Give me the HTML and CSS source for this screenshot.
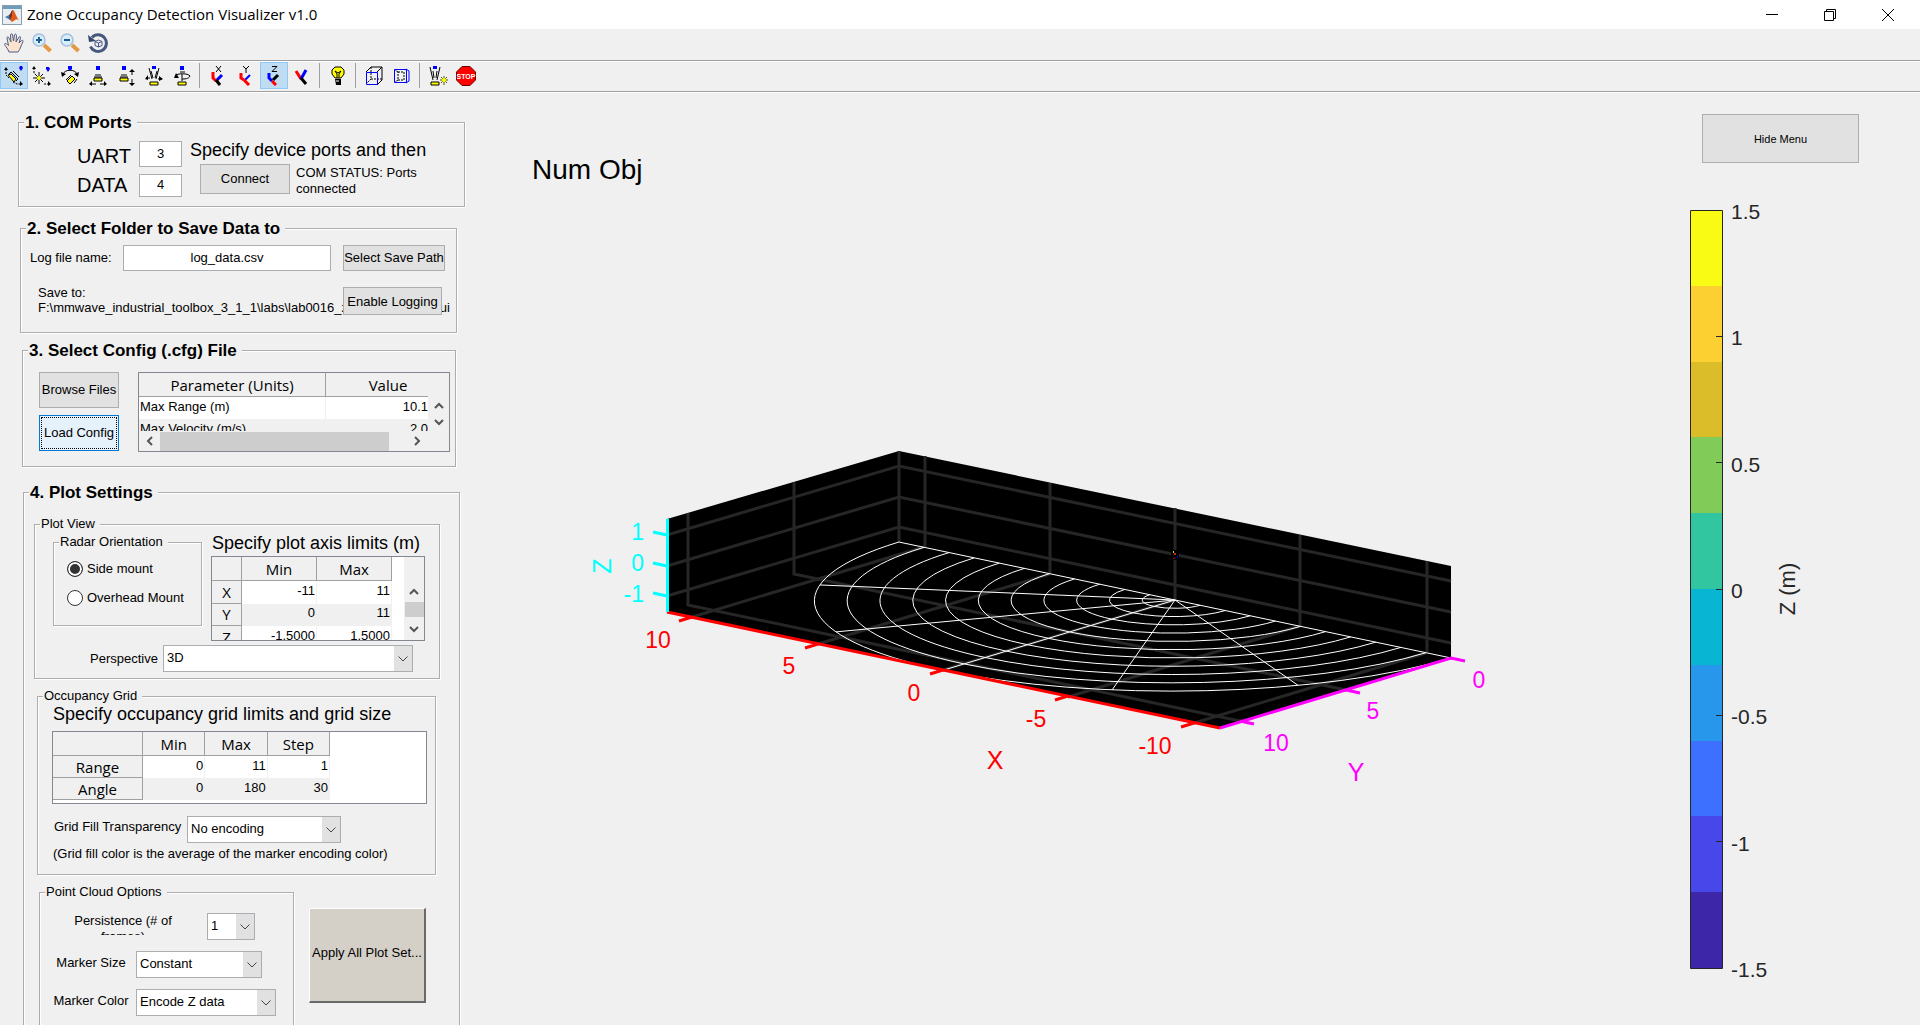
FILE: index.html
```html
<!DOCTYPE html>
<html lang="en">
<head>
  <meta charset="UTF-8">
  <meta name="viewport" content="width=device-width, initial-scale=1.0">
  <title>Zone Occupancy Detection Visualizer v1.0</title>
  <link rel="stylesheet" href="styles.css">
</head>
<body>
  <header class="titlebar">
    <svg class="app-icon" viewBox="0 0 20 20" aria-hidden="true">
      <rect x="0.5" y="0.5" width="19" height="19" fill="#e9eef2" stroke="#8a9eae"/>
      <rect x="1" y="1" width="18" height="3" fill="#6f9cba"/>
      <path d="M3 12l4-2 3 3-2 2z" fill="#3f7fb5"/>
      <path d="M7 10c2-1 2-5 4-5l-1 8-2 2z" fill="#7c2a1c"/>
      <path d="M11 5c2 1 3 7 6 10-2-1-3-1-4 0l-3 2-2-2c2-2 2-7 3-10z" fill="#dd5a1d"/>
    </svg>
    <h1>Zone Occupancy Detection Visualizer v1.0</h1>
    <div class="window-buttons">
      <button type="button" aria-label="Minimize"><svg viewBox="0 0 14 14"><path d="M1 6.500h12"/></svg></button>
      <button type="button" aria-label="Restore"><svg viewBox="0 0 14 14"><path d="M1.500 3.500h9v9h-9zM3.500 3.500v-2h9v9h-2"/></svg></button>
      <button type="button" aria-label="Close"><svg viewBox="0 0 14 14"><path d="M1 1l12 12M13 1L1 13"/></svg></button>
    </div>
  </header>

  <div class="toolbar toolbar-top">
    <button type="button" aria-label="Pan">
      <svg viewBox="0 0 20 20"><path d="M5 19c-1-3-3-5-4.500-7.500 0-1.500 2-1.500 4 1L3 5c0-1.500 1.500-1.500 2 0l2 4L6.500 2c.3-1.500 2-1.500 2 0l1 6 1-6c.5-1.500 2-1 2 .5L12 9l3-5c1-1 2 0 1.500 1L15 10l2.500-2.500c1-.7 2 .2 1.500 1.200-2 3.300-2.500 7.300-5 10.300z" fill="#fbe3cf" stroke="#4a5f86"/></svg>
    </button>
    <button type="button" aria-label="Zoom in">
      <svg viewBox="0 0 20 20"><path d="M12 12l6.500 6" stroke="#e39a45" stroke-width="4"/><circle cx="7" cy="7" r="6" fill="#d6edfb" stroke="#a5bfdc" stroke-width="1.500"/><path d="M7 4v6M4 7h6" stroke="#1d5d91" stroke-width="2"/></svg>
    </button>
    <button type="button" aria-label="Zoom out">
      <svg viewBox="0 0 20 20"><path d="M12 12l6.500 6" stroke="#e39a45" stroke-width="4"/><circle cx="7" cy="7" r="6" fill="#d6edfb" stroke="#a5bfdc" stroke-width="1.500"/><path d="M4 7h6" stroke="#1d5d91" stroke-width="2"/></svg>
    </button>
    <button type="button" aria-label="Rotate 3D">
      <svg viewBox="0 0 20 20"><path d="M4 4.500a8.300 8.300 0 1 1-1.500 9" fill="none" stroke="#47587e" stroke-width="3"/><path d="M0 2l1 7 7-1z" fill="#33466f"/><path d="M7 8.500l3.500-1.500 3.500 1.500v4L10.500 14 7 12.500zM7 8.500l3.500 1.500L14 8.500M10.500 10v4" fill="#eef" stroke="#47587e"/></svg>
    </button>
  </div>

  <div class="toolbar toolbar-camera">
    <button type="button" class="active" aria-label="Orbit camera">
      <svg viewBox="0 0 20 20"><path d="M2 3v6M2 9l3 3M9 16l4 2h3" class="dash"/><path d="M0 4l2-3 2 3zM16 15l3 3-3 2z"/><path d="M16 0h2l1 2-2 3-2-3z" fill="#00f"/><path d="M5 8l2-2 7 7-2 2M9 5l6 6" class="ln"/><path d="M4 9l3-1 5 5-2 3z" class="yellow"/></svg>
    </button>
    <button type="button" aria-label="Orbit scene light">
      <svg viewBox="0 0 20 20"><path d="M2 2v5l2 2M12 18h4" class="dash"/><path d="M0 3l2-3 2 3zM16 15l3 3-3 2z"/><path d="M14 1h3l1 2-2 3-2-3z" fill="#00f"/><path d="M7 6v12M1 12h12M3 8l8 8M11 8l-8 8" class="ln"/><circle cx="7" cy="12" r="2" fill="#ff0"/></svg>
    </button>
    <button type="button" aria-label="Pan tilt camera">
      <svg viewBox="0 0 20 20"><path d="M3 8c2-5 12-5 14 0" class="ln"/><path d="M1 6l1 5 4-3zM19 6l-1 5-4-3z"/><path d="M8 0h4v3l-2 2-2-2z" fill="#00f"/><path d="M6 14l5-5M14 17l3-4" class="ln"/><path d="M7 15l5-5 3 3-5 5z" class="yellow"/></svg>
    </button>
    <button type="button" aria-label="Move camera horizontally">
      <svg viewBox="0 0 20 20"><rect x="8" y="0" width="4" height="4" fill="#00f"/><path d="M7 9h6M6 11h8M2 18h6M12 18h6" class="ln"/><path d="M1 18l3-3v5zM19 18l-3-3v5z"/><path d="M6 12h8v3h-8z" class="yellow"/></svg>
    </button>
    <button type="button" aria-label="Move camera vertically">
      <svg viewBox="0 0 20 20"><rect x="6" y="0" width="4" height="4" fill="#00f"/><path d="M5 9h6M4 11h8M16 5v4M16 13v5" class="ln"/><path d="M16 3l3 3h-6zM16 20l3-3h-6z"/><path d="M4 12h8v3h-8z" class="yellow"/></svg>
    </button>
    <button type="button" aria-label="Move camera forward and back">
      <svg viewBox="0 0 20 20"><rect x="8" y="0" width="4" height="3" fill="#00f"/><path d="M5 2l3 11M15 2l-3 11M2 12h4M14 13h4M7 5l2 7M13 5l-2 7" class="ln"/><path d="M1 13l3-4v5zM19 13l-4-3v5z"/><path d="M6 16h8v3h-8z" class="yellow"/></svg>
    </button>
    <button type="button" aria-label="Roll camera">
      <svg viewBox="0 0 20 20"><rect x="8" y="0" width="4" height="4" fill="#00f"/><path d="M3 10c2-3 13-3 15 0-1 3-6 3-8 3M8 6h5M10 8v7" class="ln"/><path d="M2 12l2-5 3 5z"/><path d="M6 16h8v3h-8z" class="yellow"/></svg>
    </button>
    <span class="separator"></span>
    <button type="button" aria-label="Principal axis X">
      <svg viewBox="0 0 20 20"><path d="M8 0l5 6M13 0L8 6" class="ln"/><path d="M5 6v6l3 3" stroke="#f00" stroke-width="3"/><path d="M9 14l5-5" stroke="#00f" stroke-width="3"/><path d="M8 14l4 5" class="thick"/></svg>
    </button>
    <button type="button" aria-label="Principal axis Y">
      <svg viewBox="0 0 20 20"><path d="M7 0l3 3 3-3M10 3v4" class="ln"/><path d="M5 7v5l3 2" stroke="#f00" stroke-width="3"/><path d="M9 14l5-5" stroke="#00f" stroke-width="2"/><path d="M8 14l5 5" stroke="#f00" stroke-width="3"/></svg>
    </button>
    <button type="button" class="active" aria-label="Principal axis Z">
      <svg viewBox="0 0 20 20"><path d="M8 .5h5l-5 5h5" class="ln"/><path d="M5 7v5l3 3" stroke="#00f" stroke-width="3"/><path d="M9 14l5-5" class="thick"/><path d="M8 15l4 4" stroke="#f00" stroke-width="3"/></svg>
    </button>
    <button type="button" aria-label="No principal axis">
      <svg viewBox="0 0 20 20"><path d="M4 5l5 8" stroke="#f00" stroke-width="3"/><path d="M14 4l-5 9" stroke="#00f" stroke-width="3"/><path d="M9 12l5 6" class="thick"/></svg>
    </button>
    <span class="separator"></span>
    <button type="button" aria-label="Toggle scene light">
      <svg viewBox="0 0 20 20"><path d="M7 12L4 8V4l3-3h6l3 3v4l-3 4z" class="yellow"/><path d="M9 12V8L7 5l3 2 3-2-2 3v4" class="ln"/><path d="M7 13h6v6H8z"/><path d="M8 15h3" stroke="#fff"/></svg>
    </button>
    <span class="separator"></span>
    <button type="button" aria-label="Orthographic projection">
      <svg viewBox="0 0 20 20"><path d="M2 6l5-5h11v13l-5 5M13 6l5-5" class="ln"/><path d="M7 1v12h11M7 13l-5 5" class="dash"/><path d="M2.500 6.500h11v12h-11z" fill="none" stroke="#00f"/></svg>
    </button>
    <button type="button" aria-label="Perspective projection">
      <svg viewBox="0 0 20 20"><path d="M2.500 3.500h12v13h-12zM14 3l3 2v10l-3 2" fill="none" stroke="#00f"/><path d="M6 6h6v8H6zM6 6L3 4M6 14l-3 2" class="dash"/></svg>
    </button>
    <span class="separator"></span>
    <button type="button" aria-label="Reset camera and light">
      <svg viewBox="0 0 20 20"><rect x="5" y="0" width="4" height="3" fill="#00f"/><path d="M2 1l3 13M12 1L9 14M5 5l1 7M9 5l-1 7" class="ln"/><path d="M3 16h8v3H3z" class="yellow"/><path d="M16 10v9M12 14h8M13 11l6 6M19 11l-6 6" stroke="#550"/><circle cx="16" cy="14" r="2" fill="#ff0"/></svg>
    </button>
    <button type="button" aria-label="Stop">
      <svg class="stop-icon" viewBox="0 0 20 20"><path d="M6 .5h8L19.500 6v8L14 19.500H6L.5 14V6z" fill="#f00" stroke="#600"/><text x="10" y="13">STOP</text></svg>
    </button>
  </div>

  <main class="workspace">
    <form class="sidebar">
      <fieldset class="panel ports">
        <legend>1. COM Ports</legend>
        <div class="port-grid">
          <label for="uart">UART</label><input id="uart" type="text" value="3">
          <label for="data">DATA</label><input id="data" type="text" value="4">
        </div>
        <div class="port-connect">
          <p class="hint">Specify device ports and then</p>
          <div class="connect-row">
            <button type="button" class="btn">Connect</button>
            <p>COM STATUS: Ports connected</p>
          </div>
        </div>
      </fieldset>

      <fieldset class="panel folder">
        <legend>2. Select Folder to Save Data to</legend>
        <div class="file-row">
          <label for="log-name">Log file name:</label>
          <input id="log-name" type="text" value="log_data.csv">
          <button type="button" class="btn">Select Save Path</button>
        </div>
        <div class="save-row">
          <p>Save to: <br>F:\mmwave_industrial_toolbox_3_1_1\labs\lab0016_zone_occupied\gui</p>
          <button type="button" class="btn">Enable Logging</button>
        </div>
      </fieldset>

      <fieldset class="panel config">
        <legend>3. Select Config (.cfg) File</legend>
        <div class="config-buttons">
          <button type="button" class="btn">Browse Files</button>
          <button type="button" class="btn focused">Load Config</button>
        </div>
        <div class="table-frame config-frame">
          <div class="config-scroll">
            <table class="config-table">
              <thead><tr><th>Parameter (Units)</th><th>Value</th></tr></thead>
              <tbody>
                <tr><td>Max Range (m)</td><td>10.1</td></tr>
                <tr><td>Max Velocity (m/s)</td><td>2.0</td></tr>
              </tbody>
            </table>
            <div class="v-arrows">
              <svg viewBox="0 0 10 7"><path d="M1 6l4-4 4 4"/></svg>
              <svg viewBox="0 0 10 7"><path d="M1 1l4 4 4-4"/></svg>
            </div>
          </div>
          <div class="h-scroll">
            <svg viewBox="0 0 7 10"><path d="M6 1L2 5l4 4"/></svg>
            <span class="h-thumb"></span>
            <svg viewBox="0 0 7 10"><path d="M1 1l4 4-4 4"/></svg>
          </div>
        </div>
      </fieldset>

      <fieldset class="panel settings">
        <legend>4. Plot Settings</legend>

        <fieldset class="group plot-view">
          <legend>Plot View</legend>
          <div class="view-row">
            <fieldset class="group orientation">
              <legend>Radar Orientation</legend>
              <label><input type="radio" name="mount" checked>Side mount</label>
              <label><input type="radio" name="mount">Overhead Mount</label>
            </fieldset>
            <div class="limits">
              <p class="hint">Specify plot axis limits (m)</p>
              <div class="table-frame limits-frame">
                <table class="limits-table">
                  <thead><tr><th></th><th>Min</th><th>Max</th></tr></thead>
                  <tbody>
                    <tr><th>X</th><td>-11</td><td>11</td></tr>
                    <tr><th>Y</th><td>0</td><td>11</td></tr>
                    <tr><th>Z</th><td>-1.5000</td><td>1.5000</td></tr>
                  </tbody>
                </table>
                <div class="v-scroll">
                  <svg viewBox="0 0 10 7"><path d="M1 6l4-4 4 4"/></svg>
                  <span class="v-thumb"></span>
                  <svg viewBox="0 0 10 7"><path d="M1 1l4 4 4-4"/></svg>
                </div>
              </div>
            </div>
          </div>
          <div class="perspective-row">
            <label for="perspective">Perspective</label>
            <select id="perspective"><option>3D</option></select>
          </div>
        </fieldset>

        <fieldset class="group occupancy">
          <legend>Occupancy Grid</legend>
          <p class="hint">Specify occupancy grid limits and grid size</p>
          <div class="table-frame grid-frame">
            <table class="grid-table">
              <thead><tr><th></th><th>Min</th><th>Max</th><th>Step</th></tr></thead>
              <tbody>
                <tr><th>Range</th><td>0</td><td>11</td><td>1</td></tr>
                <tr><th>Angle</th><td>0</td><td>180</td><td>30</td></tr>
              </tbody>
            </table>
          </div>
          <div class="fill-row">
            <label for="fill">Grid Fill Transparency</label>
            <select id="fill"><option>No encoding</option></select>
          </div>
          <p class="note">(Grid fill color is the average of the marker encoding color)</p>
        </fieldset>

        <div class="cloud-row">
          <fieldset class="group cloud">
            <legend>Point Cloud Options</legend>
            <div class="cloud-field">
              <label class="clipped" for="persistence">Persistence (# of frames)</label>
              <select id="persistence" class="select-persistence"><option>1</option></select>
            </div>
            <div class="cloud-field">
              <label for="marker-size">Marker Size</label>
              <select id="marker-size" class="select-size"><option>Constant</option></select>
            </div>
            <div class="cloud-field">
              <label for="marker-color">Marker Color</label>
              <select id="marker-color" class="select-color"><option>Encode Z data</option></select>
            </div>
          </fieldset>
          <button type="button" class="apply">Apply All Plot Set...</button>
        </div>
      </fieldset>
    </form>

    <section class="plot">
      <h2>Num Obj</h2>
      <svg class="scene" viewBox="480 200 1180 800" role="img" aria-label="3D occupancy plot">
        <!-- walls and floor -->
        <path d="M899 451L1451 566V658L1220 728 667 612V519z"/>

        <g class="grid">
          <path d="M899 451v91M925 456v91M1050 483v91M1175 508v92M1300 535v91M1427 561v91"/>
          <path d="M688 513v92l552 116M794 482v92l552 116"/>
          <path d="M667 535l232-69 552 115M667 566l232-69 552 115M667 596l232-69 552 116"/>
          <path d="M924 547l-232 70M1050 574l-232 70M1175 600l-232 70M1300 626l-232 71M1426 653l-232 70"/>
        </g>

        <!-- range arcs and angle spokes, drawn in metres on the floor -->
        <g class="zones" transform="matrix(-25.1 -5.27 -21.09 6.39 1175 600)">
          <path d="M-1 0A1 1 0 0 0 1 0M-2 0A2 2 0 0 0 2 0M-3 0A3 3 0 0 0 3 0M-4 0A4 4 0 0 0 4 0M-5 0A5 5 0 0 0 5 0M-6 0A6 6 0 0 0 6 0M-7 0A7 7 0 0 0 7 0M-8 0A8 8 0 0 0 8 0M-9 0A9 9 0 0 0 9 0M-10 0A10 10 0 0 0 10 0M-11 0A11 11 0 0 0 11 0"/>
          <path d="M-11 0H11M0 0V11M0 0L9.526 5.500M0 0L5.500 9.526M0 0L-5.500 9.526M0 0L-9.526 5.500"/>
        </g>

        <g>
          <rect x="1171" y="550" width="8" height="10"/>
          <rect x="1173" y="551" width="1" height="2" fill="#fd0"/>
          <rect x="1174" y="553" width="2" height="2" fill="#c22"/>
          <rect x="1173" y="558" width="2" height="1" fill="#a00"/>
          <rect x="1177" y="556" width="1" height="2" fill="#00f"/>
        </g>

        <g class="axis axis-x">
          <path d="M667 612l553 116M692 617l-13 4M818 644l-13 4M943 670l-13 4M1068 696l-13 4M1194 723l-13 4"/>
          <text x="658" y="648">10</text>
          <text x="789" y="674">5</text>
          <text x="914" y="701">0</text>
          <text x="1036" y="727">-5</text>
          <text x="1155" y="754">-10</text>
          <text class="axis-name" x="995" y="769">X</text>
        </g>
        <g class="axis axis-y">
          <path d="M1220 728l231-70 14 3M1346 690l14 3M1240 721l14 3"/>
          <text x="1479" y="688">0</text>
          <text x="1373" y="719">5</text>
          <text x="1276" y="751">10</text>
          <text class="axis-name" x="1356" y="781">Y</text>
        </g>
        <g class="axis axis-z">
          <path d="M667.500 519v93M667 535l-14-3M667 566l-14-3M667 596l-14-3"/>
          <text x="644" y="540">1</text>
          <text x="644" y="571">0</text>
          <text x="644" y="602">-1</text>
          <text class="axis-name z-name" transform="translate(611 566) rotate(-90)">Z</text>
        </g>
      </svg>
    </section>

    <aside class="legend-side">
      <button type="button" class="btn hide-menu">Hide Menu</button>
      <svg class="colorbar" viewBox="0 0 130 790" role="img" aria-label="Z color scale in metres">
        <g shape-rendering="crispEdges">
          <rect x="1" y="10" width="32" height="76" fill="#f9fb15"/>
          <rect x="1" y="86" width="32" height="76" fill="#fcd030"/>
          <rect x="1" y="162" width="32" height="75" fill="#dabd29"/>
          <rect x="1" y="237" width="32" height="76" fill="#81cc59"/>
          <rect x="1" y="313" width="32" height="76" fill="#31c69f"/>
          <rect x="1" y="389" width="32" height="76" fill="#08b5d2"/>
          <rect x="1" y="465" width="32" height="76" fill="#2797eb"/>
          <rect x="1" y="541" width="32" height="75" fill="#3e70ff"/>
          <rect x="1" y="616" width="32" height="76" fill="#4747ea"/>
          <rect x="1" y="692" width="32" height="76" fill="#3e26a8"/>
        </g>
        <path class="bar-frame" d="M.5 10.500h32v758h-32zM26 136.500h7M26 262.500h7M26 389.500h7M26 515.500h7M26 641.500h7"/>
        <text x="41" y="19">1.5</text>
        <text x="41" y="145">1</text>
        <text x="41" y="272">0.5</text>
        <text x="41" y="398">0</text>
        <text x="41" y="524">-0.5</text>
        <text x="41" y="651">-1</text>
        <text x="41" y="777">-1.5</text>
        <text class="bar-name" transform="translate(105 389) rotate(-90)">Z (m)</text>
      </svg>
    </aside>
  </main>
</body>
</html>
```
FILE: styles.css
```css
* {
  box-sizing: border-box;
}

body {
  display: flex;
  flex-direction: column;
  height: 100vh;
  margin: 0;
  overflow: hidden;
  background-color: #f0f0f0;
  color: #000;
  font-family: "Liberation Sans", Arial, sans-serif;
  font-size: 13px;
  line-height: 16px;
}

p, h1, h2 {
  margin: 0;
  font-weight: normal;
}

button, input, select {
  font: inherit;
  color: inherit;
}

/* Title bar */
.titlebar {
  display: flex;
  align-items: center;
  flex: none;
  height: 29px;
  padding: 0 3px 0 2px;
  background-color: #fff;
}

.titlebar h1 {
  flex: 1;
  margin-left: 5px;
  padding-bottom: 2px;
  font-family: "Open Sans", sans-serif;
  font-size: 15px;
  line-height: 20px;
}

.app-icon {
  width: 20px;
  height: 20px;
}

.window-buttons {
  display: flex;
}

.window-buttons button {
  display: flex;
  align-items: center;
  justify-content: center;
  width: 58px;
  height: 29px;
  padding: 0;
  border: 0;
  background: none;
}

.window-buttons svg {
  width: 14px;
  height: 14px;
  fill: none;
  stroke: #000;
}

/* Toolbars */
.toolbar {
  display: flex;
  align-items: center;
  flex: none;
  border-bottom: 1px solid #a0a0a0;
  box-shadow: 0 1px 0 #fff;
}

.toolbar-top {
  height: 32px;
  padding-bottom: 3px;
}

.toolbar-camera {
  height: 31px;
  padding-bottom: 1px;
}

.toolbar button {
  display: flex;
  align-items: center;
  justify-content: center;
  width: 28px;
  height: 27px;
  padding: 0;
  border: 1px solid transparent;
  background: none;
}

.toolbar .active {
  border-color: #90c8f6;
  background-color: #c0dcf3;
}

.toolbar svg {
  width: 20px;
  height: 20px;
}

.toolbar .ln {
  fill: none;
  stroke: #000;
}

.toolbar .dash {
  fill: none;
  stroke: #000;
  stroke-dasharray: 2 1;
}

.toolbar .thick {
  fill: none;
  stroke: #000;
  stroke-width: 3;
}

.toolbar path[stroke-width] {
  fill: none;
}

.toolbar .yellow {
  fill: #ff0;
  stroke: #000;
}

.separator {
  width: 1px;
  height: 25px;
  margin: 0 4px 0 3px;
  background-color: #a0a0a0;
}

.stop-icon text {
  fill: #fff;
  font-size: 7px;
  font-weight: bold;
  text-anchor: middle;
}

/* Workspace */
.workspace {
  display: flex;
  flex: 1;
  min-height: 0;
  padding-top: 1px;
}

.sidebar {
  flex: none;
  width: 25%;
  min-width: 480px;
  padding: 18px 16px 0 18px;
  overflow: hidden;
}

.panel, .group {
  --pad: 0px;
  min-width: 0;
  margin: 0;
  padding: 0 0 0 var(--pad);
  border: 1px solid #adadad;
  box-shadow: 1px 1px 0 #fff, inset 1px 1px 0 #fff;
}

/* the title stays by the corner whatever the panel's inner padding */
.panel > legend, .group > legend {
  margin-left: calc(5px - var(--pad));
  padding: 0 5px 0 1px;
  background-color: #f0f0f0;
}

.panel > legend {
  padding-top: 2px;
  font-size: 17px;
  font-weight: bold;
  line-height: 20px;
}

.group > legend {
  font-size: 13px;
  line-height: 16px;
}

.hint {
  font-size: 18px;
  line-height: 22px;
  white-space: nowrap;
}

.btn {
  padding: 0;
  border: 1px solid #adadad;
  background-color: #e1e1e1;
  text-align: center;
  white-space: nowrap;
}

input[type="text"] {
  min-width: 0;
  height: 26px;
  padding: 0 0 2px;
  border: 1px solid #abadb3;
  background-color: #fff;
  text-align: center;
}

select {
  height: 27px;
  padding: 0 22px 2px 3px;
  border: 1px solid #abadb3;
  border-radius: 0;
  appearance: none;
  background-color: #fff;
  background-image:
    url("data:image/svg+xml,%3Csvg xmlns='http://www.w3.org/2000/svg' width='10' height='6'%3E%3Cpath d='M.5.5L5 5 9.500.5' fill='none' stroke='%23444'/%3E%3C/svg%3E"),
    linear-gradient(#e1e1e1, #e1e1e1);
  background-position: right 4px center, right center;
  background-repeat: no-repeat;
  background-size: 10px 6px, 18px 100%;
}

/* 1. COM Ports */
.ports {
  --pad: 58px;
  display: flex;
  gap: 8px;
  margin-right: -1px;
  padding: 6px 0 9px var(--pad);
}

.port-grid {
  display: grid;
  grid-template-columns: 52px 43px;
  gap: 6px 10px;
  align-items: center;
  padding-top: 2px;
}

.port-grid label {
  font-size: 20px;
  line-height: 22px;
}

.port-grid label:first-child {
  padding-top: 4px;
}

.port-grid input:last-child {
  height: 23px;
}

.connect-row {
  display: flex;
  gap: 6px;
  margin-top: 3px;
  padding-left: 10px;
}

.connect-row .btn {
  width: 90px;
  height: 30px;
}

.connect-row p {
  width: 140px;
  padding-top: 1px;
}

/* 2. Save folder */
.folder {
  margin: 10px 7px 0 2px;
}

.file-row {
  display: flex;
  align-items: center;
  padding: 6px 11px 0 9px;
}

.file-row label {
  width: 93px;
}

.file-row input {
  flex: 1;
}

.file-row .btn {
  width: 102px;
  height: 26px;
  margin-left: 12px;
}

.save-row {
  position: relative;
  padding: 14px 0 17px 17px;
  line-height: 15px;
  white-space: nowrap;
}

.save-row .btn {
  position: absolute;
  top: 16px;
  right: 14px;
  width: 99px;
  height: 28px;
}

/* 3. Config file */
.config {
  --pad: 16px;
  display: flex;
  gap: 19px;
  margin: 6px 8px 0 4px;
  padding: 11px 5px 14px var(--pad);
}

.config-buttons {
  display: flex;
  flex-direction: column;
  gap: 7px;
}

.config-buttons .btn {
  width: 80px;
  height: 36px;
}

.btn.focused {
  border-color: #0078d7;
  outline: 1px dotted #000;
  outline-offset: -3px;
  background-color: #e5f1fb;
}

.table-frame {
  overflow: hidden;
  border: 1px solid #828790;
}

table {
  border-collapse: separate;
  border-spacing: 0;
}

th, td {
  height: 22px;
  padding: 0;
}

th {
  border-right: 1px solid #a0a0a0;
  border-bottom: 1px solid #a0a0a0;
  background-color: #f0f0f0;
  font-family: "Open Sans", sans-serif;
  font-size: 15px;
  font-weight: normal;
  line-height: 20px;
}

thead th {
  height: 24px;
}

td {
  padding: 0 1px 3px;
  border-right: 1px solid #f0f0f0;
  background-color: #fff;
  line-height: 16px;
  text-align: right;
}

tbody tr:nth-child(even) td {
  background-color: #f0f0f0;
}

.config-frame {
  flex: 1;
  height: 80px;
}

.config-scroll {
  display: flex;
  height: 58px;
  overflow: hidden;
}

.config-table {
  flex: 1;
  table-layout: fixed;
}

.config-table th:first-child {
  width: 187px;
}

.config-table th:last-child {
  padding-left: 22px;
  border-right: 0;
}

.config-table td:first-child {
  text-align: left;
}

.config-table td:last-child {
  padding-right: 0;
  border-right: 0;
}

.v-arrows {
  display: flex;
  flex-direction: column;
  align-items: center;
  gap: 10px;
  width: 21px;
  padding-top: 29px;
}

.v-arrows svg, .v-scroll svg {
  width: 10px;
  height: 7px;
}

.h-scroll svg {
  width: 7px;
  height: 10px;
}

.v-arrows path, .v-scroll path, .h-scroll path {
  fill: none;
  stroke: #555;
  stroke-width: 2;
}

.h-scroll {
  display: flex;
  align-items: center;
  height: 20px;
  padding: 0 28px 0 7px;
}

.h-thumb {
  flex: 1;
  height: 19px;
  margin: 0 25px 0 7px;
  background-color: #cdcdcd;
}

/* 4. Plot settings */
.settings {
  --pad: 10px;
  margin: 14px 4px 0 5px;
  padding: 13px 0 80px var(--pad);
}

.plot-view {
  margin-right: 19px;
  padding-bottom: 6px;
}

.view-row {
  display: flex;
  gap: 9px;
  padding: 2px 14px 0 18px;
}

.orientation {
  flex: 1;
  height: 92px;
}

.orientation label {
  display: flex;
  align-items: center;
  gap: 4px;
  height: 16px;
  margin: 11px 0 13px 13px;
  white-space: nowrap;
}

.orientation input {
  width: 16px;
  height: 16px;
  margin: 0;
  border: 1px solid #333;
  border-radius: 50%;
  appearance: none;
  background-color: #fff;
}

.orientation input:checked {
  background-color: #333;
  box-shadow: inset 0 0 0 2px #fff;
}

.limits {
  width: 214px;
}

.limits .hint {
  padding: 0 0 4px 1px;
  line-height: 18px;
}

.limits-frame {
  display: flex;
  justify-content: space-between;
  height: 85px;
  background-color: #fff;
}

.limits-table {
  flex: none;
  width: 180px;
  height: 92px;
  table-layout: fixed;
}

.limits-table th:first-child {
  width: 30px;
}

.v-scroll {
  display: flex;
  flex-direction: column;
  align-items: center;
  width: 20px;
  padding-top: 31px;
  background-color: #f0f0f0;
}

.v-thumb {
  width: 19px;
  height: 15px;
  margin: 7px 0 9px;
  background-color: #cdcdcd;
}

.perspective-row {
  display: flex;
  align-items: center;
  gap: 5px;
  margin-top: 4px;
  padding: 0 26px 0 55px;
}

.perspective-row select {
  flex: 1;
}

.occupancy {
  --pad: 14px;
  margin: 9px 23px 0 3px;
  padding: 0 8px 12px var(--pad);
}

.occupancy .hint {
  padding: 0 0 2px 1px;
  line-height: 20px;
}

.grid-frame {
  height: 73px;
  margin-top: 5px;
  background-color: #fff;
}

.grid-table {
  width: 277px;
  table-layout: fixed;
}

.grid-table th:first-child {
  width: 90px;
}

.fill-row {
  display: flex;
  gap: 6px;
  margin-top: 12px;
  padding-left: 2px;
}

.fill-row label {
  width: 127px;
  padding-top: 3px;
  white-space: nowrap;
}

.fill-row select {
  width: 154px;
}

.note {
  margin-top: 3px;
  padding-left: 1px;
  white-space: nowrap;
}

.cloud-row {
  display: flex;
  align-items: flex-start;
  gap: 15px;
  margin: 9px 33px 0 5px;
}

.cloud {
  --pad: 10px;
  flex: 1;
  padding: 13px 0 40px var(--pad);
}

.cloud-field {
  display: flex;
  gap: 4px;
  height: 27px;
  margin-bottom: 11px;
}

.cloud-field label {
  width: 82px;
  padding: 4px 0;
  text-align: center;
  white-space: nowrap;
}

.cloud-field .clipped {
  width: 106px;
  height: 22px;
  margin: 0 27px 0 20px;
  padding: 0;
  overflow: hidden;
  white-space: normal;
}

.select-persistence {
  width: 48px;
}

.select-size {
  width: 126px;
}

.select-color {
  width: 140px;
}

.apply {
  width: 117px;
  height: 95px;
  margin-top: 24px;
  padding: 0 0 4px;
  border-width: 1px 2px 2px 1px;
  border-style: solid;
  border-color: #fff #696969 #696969 #fff;
  background-color: #d4d0c8;
  white-space: nowrap;
}

/* Plot */
.plot {
  flex: 1;
  min-width: 0;
}

.plot h2 {
  padding: 61px 0 0 52px;
  font-size: 28px;
  line-height: 32px;
}

.scene {
  display: block;
  width: 100%;
  margin-top: 14px;
}

.grid {
  fill: none;
  stroke: #262626;
  stroke-width: 3;
}

.zones path {
  fill: none;
  stroke: #fff;
  stroke-width: 1;
  vector-effect: non-scaling-stroke;
}

.axis path {
  fill: none;
  stroke-width: 3;
}

.axis text {
  font-size: 23px;
  text-anchor: middle;
}

.axis .axis-name {
  font-size: 25px;
}

.axis-x {
  fill: #f00;
  stroke: #f00;
}

.axis-y {
  fill: #f0f;
  stroke: #f0f;
}

.axis-z {
  fill: #0ff;
  stroke: #0ff;
}

.axis text {
  stroke: none;
}

.axis-z text {
  text-anchor: end;
}

.axis-z .z-name {
  text-anchor: middle;
}

/* Color scale */
.legend-side {
  display: flex;
  flex-direction: column;
  flex: none;
  width: 260px;
  padding: 21px 60px 0 30px;
}

.hide-menu {
  align-self: flex-end;
  width: 157px;
  height: 49px;
  margin-right: 1px;
  font-size: 11px;
}

.colorbar {
  width: 130px;
  height: 790px;
  margin-top: 37px;
}

.colorbar text {
  fill: #262626;
  font-size: 21px;
}

.colorbar .bar-name {
  font-size: 22px;
  text-anchor: middle;
}

.bar-frame {
  fill: none;
  stroke: #262626;
}
```
